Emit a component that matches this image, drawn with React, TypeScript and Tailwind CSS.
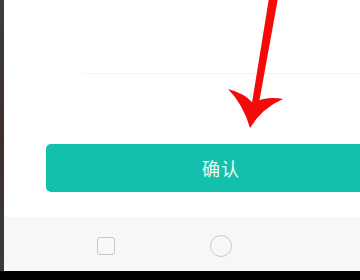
export default function App() {
  return (
    <div className="relative w-[360px] h-[280px] overflow-hidden bg-black font-['Noto_Sans_CJK_SC',sans-serif]">
      <div className="flex h-[271px]">
        {/* left edge of the phone frame */}
        <div className="w-[4px] shrink-0 bg-gradient-to-b from-[#3d3d3d] via-[#3d2f2b] to-[#3a3a3a]" />
        <div className="flex-1 min-w-0 flex flex-col bg-white">
          <div className="h-[73px]" />
          <div className="ml-[79px] h-px bg-[#f3f3f3]" />
          <div className="h-[70px]" />
          <button className="ml-[42px] w-[350px] shrink-0 self-start h-[48px] rounded-[5px] bg-[#13c0ab] text-[18px] leading-none text-[#eefbf9] tracking-[1px]">
            确认
          </button>
          <div className="h-[25px]" />
          <div className="flex-1 bg-[#f7f7f7] relative">
            <div className="absolute left-[93px] top-[20px] w-[18px] h-[18px] rounded-[3px] border-[1.5px] border-[#c9c9c9]" />
            <div className="absolute left-[206px] top-[18px] w-[22px] h-[22px] rounded-full border-[1.5px] border-[#c9c9c9]" />
          </div>
        </div>
      </div>
      <svg className="absolute left-0 top-0" width="360" height="280" viewBox="0 0 360 280">
        <path d="M269 -2 L278 -2 L259 103 L252 103 Z" fill="#f50a0a" />
        <path
          d="M228 89 Q244 93 253 103 Q266 96 283 99 Q262 108 250 128 Q243 104 228 89 Z"
          fill="#f50a0a"
        />
      </svg>
    </div>
  );
}
